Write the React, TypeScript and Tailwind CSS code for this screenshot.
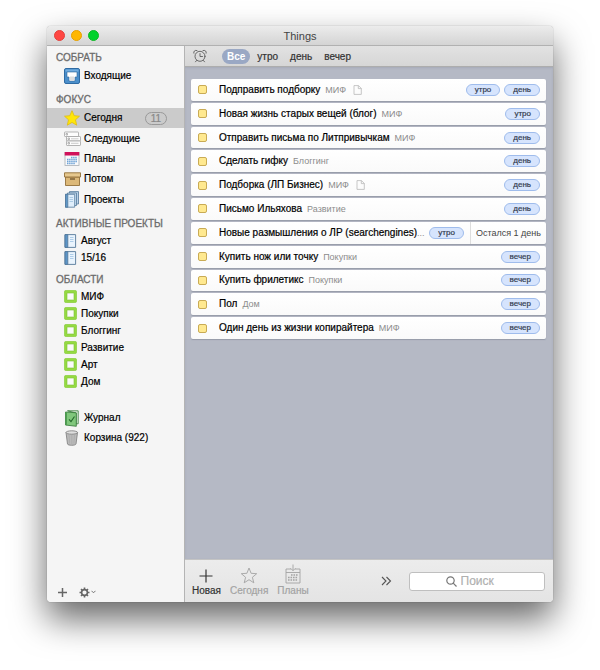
import React, { useState } from 'react';

interface Task {
  title: string;
  area: string;
  tags: string[];
  note?: boolean;
  due?: string;
}

const tasks: Task[] = [
  { title: 'Подправить подборку', area: 'МИФ', tags: ['утро', 'день'], note: true },
  { title: 'Новая жизнь старых вещей (блог)', area: 'МИФ', tags: ['утро'] },
  { title: 'Отправить письма по Литпривычкам', area: 'МИФ', tags: ['день'] },
  { title: 'Сделать гифку', area: 'Блоггинг', tags: ['день'] },
  { title: 'Подборка (ЛП Бизнес)', area: 'МИФ', tags: ['день'], note: true },
  { title: 'Письмо Ильяхова', area: 'Развитие', tags: ['день'] },
  { title: 'Новые размышления о ЛР (searchengines)', area: '...', tags: ['утро'], due: 'Остался 1 день' },
  { title: 'Купить нож или точку', area: 'Покупки', tags: ['вечер'] },
  { title: 'Купить фрилетикс', area: 'Покупки', tags: ['вечер'] },
  { title: 'Пол', area: 'Дом', tags: ['вечер'] },
  { title: 'Один день из жизни копирайтера', area: 'МИФ', tags: ['вечер'] },
];

const filters = ['Все', 'утро', 'день', 'вечер'];

const InboxIcon = () => (
  <svg viewBox="0 0 16 16" className="size-4">
    <rect x="0.5" y="0.5" width="15" height="15" rx="1.5" fill="#4b8fcb" stroke="#2f6ba3" />
    <path d="M1.5 1.5h13v2h-13z" fill="#73addf" />
    <path d="M3 4h10v5h-2v4H5V9H3z" fill="#fff" stroke="#34699a" strokeWidth="0.6" />
    <path d="M6 8.500h4V12.700H6z" fill="#dedede" />
  </svg>
);

const StarIcon = () => (
  <svg viewBox="0 0 16 16" className="size-4">
    <path
      d="M8 .7l2.200 5 5.300.5-4 3.600 1.200 5.400L8 12.400l-4.700 2.800 1.200-5.400-4-3.600 5.300-.5z"
      fill="#ffe60a"
      stroke="#dfbd10"
      strokeWidth="0.8"
      strokeLinejoin="round"
    />
  </svg>
);

const NextIcon = () => (
  <svg viewBox="0 0 17 16" className="h-4 w-[17px]" fill="#fdfdfd" stroke="#a2a2a2" strokeWidth="0.8">
    <rect x="0.5" y="1" width="14" height="4.500" rx="0.6" />
    <rect x="2.500" y="5.500" width="14" height="4.500" rx="0.6" />
    <rect x="2.500" y="10" width="14" height="4.500" rx="0.6" />
    <path d="M2 2.500h1.500v1.500H2zM4 7h1.500v1.500H4zM4 11.500h1.500v1.500H4z" />
    <path d="M7 7.800h7.500M7 12.300h7.500" stroke="#bdbdbd" />
  </svg>
);

const CalendarIcon = () => (
  <svg viewBox="0 0 16 16" className="size-4">
    <rect x="1" y="1.500" width="14" height="13" fill="#f8f9fb" stroke="#a9afb5" strokeWidth="0.8" />
    <path d="M.7 1h14.600v3.600H.7z" fill="#d0115a" />
    <path d="M7 6.500h6M3 8.500h10M3 10.500h10M3 12.500h8" stroke="#6ea3d6" strokeWidth="1.400" strokeDasharray="1.500 0.600" />
  </svg>
);

const BoxIcon = () => (
  <svg viewBox="0 0 17 16" className="h-4 w-[17px]" stroke="#93703a" strokeWidth="0.9">
    <path d="M1.500 6h14v8.500h-14z" fill="#dcb878" />
    <path d="M.5 1.800h16V6H.5z" fill="#e6c88e" />
    <path d="M6 8h5" strokeWidth="1.500" stroke="#7c6238" />
  </svg>
);

const ProjectsIcon = () => (
  <svg viewBox="0 0 16 17" className="h-[17px] w-4" stroke="#53789b" strokeWidth="0.8">
    <path d="M5.500.6h9V13h-9z" fill="#b9d2e8" />
    <path d="M3.500 2h9v12.500h-9z" fill="#c9dff1" />
    <path d="M1.500 3.300h9.200v12.900H1.500z" fill="#dfeefb" />
    <path d="M1.500 3.300h2.300v12.900H1.500z" fill="#5f97c7" />
    <path d="M5.500 6.500H9M5.500 8.500H9M5.500 10.500H9" stroke="#9dc1e0" />
  </svg>
);

const ProjectIcon = () => (
  <svg viewBox="0 0 13 14" className="h-3.5 w-[13px]" stroke="#56799a" strokeWidth="0.9">
    <path d="M1 .6h10.600v12.800H1z" fill="#eaf4fd" />
    <path d="M1 .6h2.800v12.800H1z" fill="#5b95c8" />
    <path d="M6 3.500h3.500M6 5.500h3.500M6 7.500h3.500" stroke="#a7c8e6" />
  </svg>
);

const AreaIcon = () => (
  <svg viewBox="0 0 13 13" className="size-[13px]">
    <rect x="0.3" y="0.3" width="12.400" height="12.400" rx="2" fill="#95da42" stroke="#83c83a" strokeWidth="0.6" />
    <rect x="3" y="3" width="7" height="7" rx="0.6" fill="#fafafa" stroke="#7cbf35" strokeWidth="0.6" />
  </svg>
);

const LogbookIcon = () => (
  <svg viewBox="0 0 16 17" className="h-[17px] w-4" stroke="#2e7533" strokeWidth="0.8">
    <path d="M3.500.8h10.700v13H12V3z" fill="#e6f1e4" />
    <path d="M1.500 2l10.800.8v13.500L1.500 15z" fill="#80c77c" />
    <path d="M1.500 2l1.500.1v13.100L1.500 15z" fill="#4f9f52" stroke="none" />
    <path d="M5 9.300l2 2.200 3.500-5" fill="none" stroke="#22682a" strokeWidth="1.100" />
  </svg>
);

const TrashIcon = () => (
  <svg viewBox="0 0 16 16" className="size-4" stroke="#858585" strokeWidth="0.9">
    <path d="M2 2.500l1.500 11.500c.3 1.700 8.200 1.700 8.500 0l1.500-11.500z" fill="#bababa" />
    <path d="M5 5l.7 8.500M7.800 5v9M10.500 5l-.6 8.500" stroke="#a6a6a6" strokeWidth="0.6" />
    <ellipse cx="7.750" cy="2.500" rx="5.800" ry="1.700" fill="#dedede" />
  </svg>
);

const AlarmIcon = () => (
  <svg viewBox="0 0 14 14" className="size-3.5" fill="none" stroke="#5c5c5c" strokeWidth="0.9" strokeLinecap="round">
    <circle cx="7" cy="7.300" r="5" />
    <path d="M7 4.600v2.900h2.500M3.500 11.500l-1 1.300M10.500 11.500l1 1.300" />
    <path d="M.8 4.200C.2 2.400 2 .7 4 1.500M13.200 4.200C13.800 2.400 12 .7 10 1.500" />
  </svg>
);

const NoteIcon = () => (
  <svg viewBox="0 0 9 10" className="h-2.5 w-[9px] shrink-0" fill="none" stroke="#b9b9b9" strokeWidth="0.8">
    <path d="M1 .6h4.500L8.300 3.400v6H1zM5.300.6v3h3" />
  </svg>
);

const sections = [
  { title: 'СОБРАТЬ', rows: 'h-5', items: [{ label: 'Входящие', icon: <InboxIcon /> }] },
  {
    title: 'ФОКУС',
    rows: 'h-[102px]',
    items: [
      { label: 'Сегодня', icon: <StarIcon />, count: 11 },
      { label: 'Следующие', icon: <NextIcon /> },
      { label: 'Планы', icon: <CalendarIcon /> },
      { label: 'Потом', icon: <BoxIcon /> },
      { label: 'Проекты', icon: <ProjectsIcon /> },
    ],
  },
];

const smallSections = [
  { title: 'АКТИВНЫЕ ПРОЕКТЫ', icon: <ProjectIcon />, items: ['Август', '15/16'] },
  { title: 'ОБЛАСТИ', icon: <AreaIcon />, items: ['МИФ', 'Покупки', 'Блоггинг', 'Развитие', 'Арт', 'Дом'] },
];

const SectionTitle = ({ children }: { children: React.ReactNode }) => (
  <h2 className="h-4 pl-[9px] text-[10px] leading-4 font-normal text-[#6c6c6c] [-webkit-text-stroke:0.3px]">
    {children}
  </h2>
);

interface SidebarItemProps {
  label: string;
  icon: React.ReactNode;
  count?: number;
  active?: boolean;
  onClick?: () => void;
}

const SidebarItem: React.FC<SidebarItemProps> = ({ label, icon, count, active, onClick }) => (
  <button
    type="button"
    onClick={onClick}
    className={`flex min-h-5 w-full items-center pr-[17px] pl-[17px] text-left ${active ? 'bg-[#cbcbcb]' : ''}`}
  >
    <span className="flex w-5 shrink-0">{icon}</span>
    <span>{label}</span>
    {count && (
      <span className="ml-auto w-[22px] rounded-full border border-[#999] text-center text-[10px] leading-[11px] text-[#888]">
        {count}
      </span>
    )}
  </button>
);

const Sidebar = () => {
  const [selected, setSelected] = useState('Сегодня');

  return (
    <nav className="flex w-[138px] shrink-0 flex-col border-r border-[#b4b4b4] bg-[#f5f5f5] pt-1 [-webkit-text-stroke:0.2px]">
      {sections.map((section) => (
        <section key={section.title} className="mb-1.5">
          <SectionTitle>{section.title}</SectionTitle>
          <div className={`grid auto-rows-fr ${section.rows}`}>
            {section.items.map((item) => (
              <SidebarItem
                key={item.label}
                {...item}
                active={item.label === selected}
                onClick={() => setSelected(item.label)}
              />
            ))}
          </div>
        </section>
      ))}
      {smallSections.map((section) => (
        <section key={section.title} className="mb-1.5">
          <SectionTitle>{section.title}</SectionTitle>
          {section.items.map((item) => (
            <button key={item} type="button" className="flex h-[17px] w-full items-center pl-[17px] text-left">
              <span className="flex w-[17px] shrink-0">{section.icon}</span>
              {item}
            </button>
          ))}
        </section>
      ))}
      <div className="mt-3">
        <SidebarItem label="Журнал" icon={<LogbookIcon />} />
        <SidebarItem label="Корзина (922)" icon={<TrashIcon />} />
      </div>
      <div className="mt-auto flex h-5 items-center gap-3 pl-[11px] text-[#666]">
        <button type="button" aria-label="Добавить">
          <svg viewBox="0 0 9 9" className="size-[9px]" stroke="currentColor" strokeWidth="1.500">
            <path d="M4.500 0v9M0 4.500h9" />
          </svg>
        </button>
        <button type="button" aria-label="Настройки" className="flex items-center gap-px">
          <svg viewBox="0 0 11 11" className="size-[11px]" fill="none" stroke="currentColor">
            <circle cx="5.500" cy="5.500" r="2.900" strokeWidth="1.600" />
            <path
              d="M5.500.5v1.700M5.500 8.800v1.700M.5 5.500h1.700M8.800 5.500h1.700M2 2l1.200 1.200M7.800 7.800L9 9M2 9l1.200-1.200M7.800 3.200L9 2"
              strokeWidth="1.600"
            />
          </svg>
          <svg viewBox="0 0 5 4" className="h-1 w-[5px]" fill="none" stroke="currentColor" strokeWidth="0.9">
            <path d="M.5.8l2 2 2-2" />
          </svg>
        </button>
      </div>
    </nav>
  );
};

const TaskRow = ({ task, id }: { task: Task; id: string }) => (
  <li className="flex items-center rounded-xs bg-linear-to-b from-white to-[#fafafa] pl-[7px] shadow-[0_1px_1px_rgba(80,85,105,0.3)]">
    <input
      id={id}
      type="checkbox"
      className="mr-3 size-[9px] shrink-0 appearance-none rounded-[2px] border border-[#c9ab55] bg-[#ffe990] checked:bg-[#c9ab55]"
    />
    <label htmlFor={id} className="text-[10px] whitespace-nowrap text-black [-webkit-text-stroke:0.2px]">
      {task.title}
    </label>
    <span className={`text-[9px] whitespace-nowrap text-[#8c8c8c] ${task.due ? '' : 'ml-[5px]'}`}>{task.area}</span>
    {task.note && (
      <span className="ml-[7px]">
        <NoteIcon />
      </span>
    )}
    <div className="ml-auto flex gap-1 pr-1.5">
      {task.tags.map((tag) => (
        <span
          key={tag}
          className="rounded-full border border-[#9fbcec] bg-[#d6e4fd] px-2 text-[8px] leading-[10px] text-[#333c50] [-webkit-text-stroke:0.2px]"
        >
          {tag}
        </span>
      ))}
    </div>
    {task.due && (
      <span className="flex items-center self-stretch border-l border-[#ddd] px-[5px] text-[9px] whitespace-nowrap text-[#444]">
        {task.due}
      </span>
    )}
  </li>
);

const FilterBar = () => {
  const [filter, setFilter] = useState('Все');

  return (
    <div className="flex h-[21px] items-center border-b border-[#adadad] bg-linear-to-b from-[#e2e2e2] to-[#d6d6d6] pl-2">
      <button type="button" aria-label="Напоминания" className="mr-[15px]">
        <AlarmIcon />
      </button>
      <div className="flex gap-0.5">
        {filters.map((name) => (
          <button
            key={name}
            type="button"
            onClick={() => setFilter(name)}
            className={`h-[15px] rounded-full px-[5px] text-[10px] leading-[15px] ${
              name === filter ? 'bg-[#9aa8c4] font-bold text-white' : 'text-[#333] [-webkit-text-stroke:0.2px]'
            }`}
          >
            {name}
          </button>
        ))}
      </div>
    </div>
  );
};

const Toolbar = () => (
  <div className="flex h-[43px] items-center border-t border-[#c4c4c4] bg-linear-to-b from-[#ececec] to-[#e4e4e4] pr-2 pl-[7px] text-[10px] [-webkit-text-stroke:0.2px]">
    <div className="flex gap-[9px]">
      <button type="button" className="flex flex-col items-center text-[#333]">
        <svg viewBox="0 0 20 20" className="size-5" stroke="currentColor">
          <path d="M10 5.500v13M3.500 12h13" strokeWidth="1.200" />
        </svg>
        <span className="leading-[14px]">Новая</span>
      </button>
      <button type="button" disabled className="flex flex-col items-center text-[#a3a3a3]">
        <svg viewBox="0 0 20 20" className="size-5" fill="none" stroke="currentColor" strokeWidth="0.9">
          <path d="M10 4l2.100 5.300 5.600.4-4.300 3.600 1.400 5.500L10 15.700l-4.800 3.100 1.400-5.500-4.300-3.600 5.600-.4z" />
        </svg>
        <span className="leading-[14px]">Сегодня</span>
      </button>
      <button type="button" disabled className="flex flex-col items-center text-[#a3a3a3]">
        <svg viewBox="0 0 20 20" className="size-5" fill="none" stroke="currentColor" strokeWidth="0.9">
          <path d="M10 .5v6M7.500 4.200L10 6.700l2.500-2.500" />
          <path d="M8 5H3v14h14V5h-5M3 8.500h14" />
          <path d="M8 11h7M5 13.500h10M5 16h10" strokeWidth="1.600" strokeDasharray="1.600 0.900" />
        </svg>
        <span className="leading-[14px]">Планы</span>
      </button>
    </div>
    <button type="button" aria-label="Ещё" className="mr-[17px] ml-auto text-[#555]">
      <svg viewBox="0 0 11 10" className="h-2.5 w-[11px]" fill="none" stroke="currentColor" strokeWidth="1.100">
        <path d="M1 1l4 4-4 4M5.500 1l4 4-4 4" />
      </svg>
    </button>
    <label className="flex h-[19px] w-[136px] items-center justify-center gap-1 rounded-[3px] border border-[#bfbfbf] bg-white">
      <svg viewBox="0 0 11 11" className="size-[11px] shrink-0" fill="none" stroke="#777" strokeWidth="1.200">
        <circle cx="4.500" cy="4.500" r="3.700" />
        <path d="M7.200 7.200l3.300 3.300" />
      </svg>
      <input
        type="text"
        placeholder="Поиск"
        aria-label="Поиск"
        className="w-12 text-[12px] leading-4 outline-none placeholder:text-[#b0b0b0]"
      />
    </label>
  </div>
);

const App: React.FC = () => (
  <div className="flex min-h-screen bg-white px-[47px] pt-[26px] pb-[68px] font-['Liberation_Sans',Arial,sans-serif] text-[10px] leading-3 text-black">
    <div className="flex flex-1 flex-col overflow-hidden rounded-[4px] shadow-[0_0_1px_rgba(0,0,0,0.5),0_17px_35px_rgba(0,0,0,0.6)]">
      <header className="grid h-5 grid-cols-[1fr_auto_1fr] items-center border-b border-[#b1b1b1] bg-linear-to-b from-[#ececec] to-[#d4d4d4] px-[7px]">
        <div className="flex gap-[6px]">
          <button type="button" aria-label="Закрыть" className="size-[11px] rounded-full border border-[#e2403d] bg-[#ff4743]" />
          <button type="button" aria-label="Свернуть" className="size-[11px] rounded-full border border-[#e5a000] bg-[#ffb700]" />
          <button type="button" aria-label="Развернуть" className="size-[11px] rounded-full border border-[#0db826] bg-[#00d22b]" />
        </div>
        <h1 className="pt-px text-[11px] font-normal text-[#444]">Things</h1>
      </header>
      <div className="flex flex-1">
        <Sidebar />
        <main className="flex min-w-0 flex-1 flex-col">
          <FilterBar />
          <div className="flex-1 bg-[#b5b9c5] pt-3 pr-[7px] pl-1.5 inset-shadow-[0_1px_2px_rgba(90,95,115,0.15)]">
            <ul className="grid h-[260px] auto-rows-fr gap-0.5">
              {tasks.map((task, index) => (
                <TaskRow key={task.title} task={task} id={`task-${index}`} />
              ))}
            </ul>
          </div>
          <Toolbar />
        </main>
      </div>
    </div>
  </div>
);

export default App;
